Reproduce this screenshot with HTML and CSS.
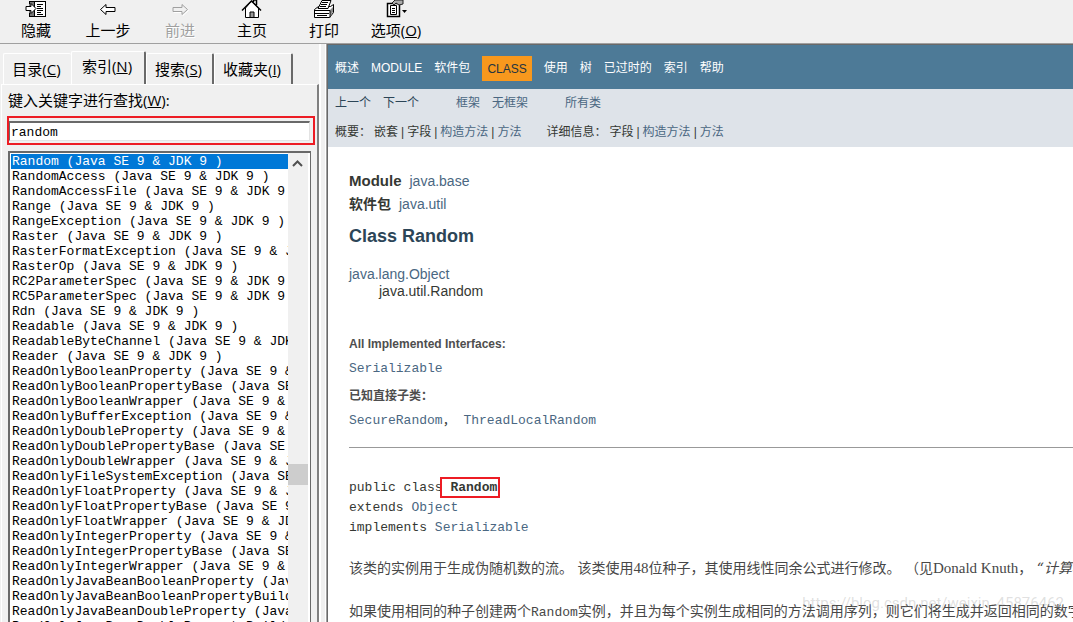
FILE: index.html
```html
<!DOCTYPE html>
<html lang="zh-CN">
<head>
<meta charset="utf-8">
<title>Class Random</title>
<link rel="stylesheet" href="styles.css">
</head>
<body>
<div class="window">
  <header class="toolbar">
    <button class="tool" type="button">
      <svg class="icon" width="22" height="18" viewBox="0 0 22 18" shape-rendering="crispEdges"><path d="M5 1H21V17H5z" fill="#fff"/><path d="M4 1h6v16H4z" fill="#777"/><path d="M4 1h17v1H4zM4 1h1v3H4zM4 13h1v4H4zM9 1h1v16H9zM20 1h1v16h-1zM4 16h17v1H4z" fill="#000"/><path d="M12 4h6M12 6h4M12 8h6M12 10h6M12 12h4M12 14h6" transform="translate(0 .5)" stroke="#000"/><path d="M1 6.5h5v-3l5 5-5 5v-3H1z" fill="#fff" stroke="#000" shape-rendering="auto"/></svg>
      <span>隐藏</span>
    </button>
    <button class="tool" type="button">
      <svg class="icon" width="22" height="18" viewBox="0 0 22 18"><path d="M3.500 9.500l5.500-5v3h9v4h-9v3z" fill="#fff" stroke="#000"/></svg>
      <span>上一步</span>
    </button>
    <button class="tool" type="button" disabled>
      <svg class="icon" width="22" height="18" viewBox="0 0 22 18"><path d="M19.500 10.500l-5.500-5v3h-9v4h9v3z" fill="none" stroke="#fff"/><path d="M18.500 9.500l-5.500-5v3h-9v4h9v3z" fill="#f0f0f0" stroke="#a0a0a0"/></svg>
      <span>前进</span>
    </button>
    <button class="tool" type="button">
      <svg class="icon" width="22" height="18" viewBox="0 0 22 18"><path d="M4.500 8v9.500h13V8L10.500 1z" fill="#fff" stroke="#000"/><path d="M1 10.500L10.500 1 20 10.500M15.500 5V0h-3v2" fill="none" stroke="#000" stroke-width="1.500"/><path d="M9 12h4v5.500H9z" fill="#999" stroke="#000"/></svg>
      <span>主页</span>
    </button>
    <button class="tool" type="button">
      <svg class="icon" width="22" height="18" viewBox="0 0 22 18"><path d="M1.500 9.500l4-3h12l3-2v8l-4 5h-15z" fill="#fff" stroke="#000"/><path d="M17 10l3-3v5l-3 4z" fill="#888"/><path d="M2 10.500h15v7M2 13.500h14" fill="none" stroke="#000"/><path d="M5 8.500l4-8h9l-3 8z" fill="#fff" stroke="#000"/><path d="M9 2.500h6M8 4.500h6M7 6.500h6M4 15.500h10" stroke="#000"/></svg>
      <span>打印</span>
    </button>
    <button class="tool" type="button">
      <svg class="icon" width="22" height="18" viewBox="0 0 22 18"><path d="M2.500 3.500h12v13h-12z" fill="#fff" stroke="#000" stroke-width="1.500"/><path d="M5.500 5.500h6v9h-6z" fill="#fff" stroke="#000"/><path d="M7 8.500h3M7 10.500h3M7 12.500h3" stroke="#000"/><path d="M7 3l3-3h8v4l-4 1-3-2-2 2z" fill="#aaa" stroke="#222"/><path d="M17 10h5l-2.500 3z" fill="#000"/></svg>
      <span>选项(<u>O</u>)</span>
    </button>
  </header>
  <div class="panes">
    <aside class="side">
      <div class="tabs" role="tablist">
        <button class="tab" type="button" role="tab">目录(<u>C</u>)</button>
        <button class="tab tab-active" type="button" role="tab" aria-selected="true">索引(<u>N</u>)</button>
        <button class="tab" type="button" role="tab">搜索(<u>S</u>)</button>
        <button class="tab tab-last" type="button" role="tab">收藏夹(<u>I</u>)</button>
      </div>
      <div class="panel">
        <label class="search-label" for="keyword">键入关键字进行查找(<u>W</u>):</label>
        <div class="highlight"><input class="search" id="keyword" type="text" value="random"></div>
        <div class="listbox">
          <ul class="entries" role="listbox" aria-label="索引">
            <li class="entry entry-selected" role="option" aria-selected="true">Random (Java SE 9 &amp; JDK 9 )</li>
            <li class="entry" role="option">RandomAccess (Java SE 9 &amp; JDK 9 )</li>
            <li class="entry" role="option">RandomAccessFile (Java SE 9 &amp; JDK 9 )</li>
            <li class="entry" role="option">Range (Java SE 9 &amp; JDK 9 )</li>
            <li class="entry" role="option">RangeException (Java SE 9 &amp; JDK 9 )</li>
            <li class="entry" role="option">Raster (Java SE 9 &amp; JDK 9 )</li>
            <li class="entry" role="option">RasterFormatException (Java SE 9 &amp; JDK 9 )</li>
            <li class="entry" role="option">RasterOp (Java SE 9 &amp; JDK 9 )</li>
            <li class="entry" role="option">RC2ParameterSpec (Java SE 9 &amp; JDK 9 )</li>
            <li class="entry" role="option">RC5ParameterSpec (Java SE 9 &amp; JDK 9 )</li>
            <li class="entry" role="option">Rdn (Java SE 9 &amp; JDK 9 )</li>
            <li class="entry" role="option">Readable (Java SE 9 &amp; JDK 9 )</li>
            <li class="entry" role="option">ReadableByteChannel (Java SE 9 &amp; JDK 9 )</li>
            <li class="entry" role="option">Reader (Java SE 9 &amp; JDK 9 )</li>
            <li class="entry" role="option">ReadOnlyBooleanProperty (Java SE 9 &amp; JDK 9 )</li>
            <li class="entry" role="option">ReadOnlyBooleanPropertyBase (Java SE 9 &amp; JDK 9 )</li>
            <li class="entry" role="option">ReadOnlyBooleanWrapper (Java SE 9 &amp; JDK 9 )</li>
            <li class="entry" role="option">ReadOnlyBufferException (Java SE 9 &amp; JDK 9 )</li>
            <li class="entry" role="option">ReadOnlyDoubleProperty (Java SE 9 &amp; JDK 9 )</li>
            <li class="entry" role="option">ReadOnlyDoublePropertyBase (Java SE 9 &amp; JDK 9 )</li>
            <li class="entry" role="option">ReadOnlyDoubleWrapper (Java SE 9 &amp; JDK 9 )</li>
            <li class="entry" role="option">ReadOnlyFileSystemException (Java SE 9 &amp; JDK 9 )</li>
            <li class="entry" role="option">ReadOnlyFloatProperty (Java SE 9 &amp; JDK 9 )</li>
            <li class="entry" role="option">ReadOnlyFloatPropertyBase (Java SE 9 &amp; JDK 9 )</li>
            <li class="entry" role="option">ReadOnlyFloatWrapper (Java SE 9 &amp; JDK 9 )</li>
            <li class="entry" role="option">ReadOnlyIntegerProperty (Java SE 9 &amp; JDK 9 )</li>
            <li class="entry" role="option">ReadOnlyIntegerPropertyBase (Java SE 9 &amp; JDK 9 )</li>
            <li class="entry" role="option">ReadOnlyIntegerWrapper (Java SE 9 &amp; JDK 9 )</li>
            <li class="entry" role="option">ReadOnlyJavaBeanBooleanProperty (Java SE 9 &amp; JDK 9 )</li>
            <li class="entry" role="option">ReadOnlyJavaBeanBooleanPropertyBuilder (Java SE 9 &amp; JDK 9 )</li>
            <li class="entry" role="option">ReadOnlyJavaBeanDoubleProperty (Java SE 9 &amp; JDK 9 )</li>
            <li class="entry" role="option">ReadOnlyJavaBeanDoublePropertyBuilder (Java SE 9 &amp; JDK 9 )</li>
          </ul>
          <div class="scrollbar">
            <svg width="19" height="20" viewBox="0 0 19 20"><path d="M5 13l4.500-4.500L14 13" fill="none" stroke="#505050" stroke-width="2"/></svg>
            <div class="track-space"></div>
            <div class="thumb"></div>
          </div>
        </div>
      </div>
    </aside>
    <div class="splitter"></div>
    <main class="doc">
      <nav class="topnav">
        <a href="#">概述</a><a href="#">MODULE</a><a href="#">软件包</a><span class="current">CLASS</span><a href="#">使用</a><a href="#">树</a><a href="#">已过时的</a><a href="#">索引</a><a href="#">帮助</a>
      </nav>
      <div class="subnav">
        <div class="subrow">
          <div class="group"><a class="strong" href="#">上一个</a><a class="strong" href="#">下一个</a></div>
          <div class="group"><a href="#">框架</a><a href="#">无框架</a></div>
          <div class="group"><a href="#">所有类</a></div>
        </div>
        <div class="subrow details">
          <div class="crumbs"><span>概要：</span><span>嵌套</span><span>|</span><span>字段</span><span>|</span><a href="#">构造方法</a><span>|</span><a href="#">方法</a></div>
          <div class="crumbs"><span>详细信息：</span><span>字段</span><span>|</span><a href="#">构造方法</a><span>|</span><a href="#">方法</a></div>
        </div>
      </div>
      <article class="content">
        <div class="origin"><b>Module</b><a href="#">java.base</a></div>
        <div class="origin"><b class="package">软件包</b><a href="#">java.util</a></div>
        <h1 class="title">Class Random</h1>
        <div class="tree"><a href="#">java.lang.Object</a><div class="child">java.util.Random</div></div>
        <dl class="facts">
          <dt>All Implemented Interfaces:</dt>
          <dd><a href="#">Serializable</a></dd>
          <dt>已知直接子类：</dt>
          <dd><a href="#">SecureRandom</a>， <a href="#">ThreadLocalRandom</a></dd>
        </dl>
        <hr class="rule">
        <pre class="signature">public class<b class="marked"> Random</b>
extends <a href="#">Object</a>
implements <a href="#">Serializable</a></pre>
        <p class="text">该类的实例用于生成伪随机数的流。 该类使用<span class="latin">48</span>位种子，其使用线性同余公式进行修改。 （见<span class="latin">Donald Knuth</span>， <i>“计算机编程艺术，第2卷”</i> ，第3.2.1节）</p>
        <p class="text">如果使用相同的种子创建两个<code>Random</code>实例，并且为每个实例生成相同的方法调用序列，则它们将生成并返回相同的数字序列。</p>
      </article>
      <div class="watermark">https://blog.csdn.net/weixin_45876462</div>
    </main>
  </div>
</div>
</body>
</html>
```
FILE: styles.css
```css
* { box-sizing: border-box; }

body {
  margin: 0;
  background: #f0f0f0;
  color: #000;
  font: 15px/20px "Open Sans", "Noto Sans CJK SC", sans-serif;
}

a { color: #4a6782; text-decoration: none; }
button { font: inherit; color: inherit; }

.window {
  display: flex;
  flex-direction: column;
  height: 100vh;
  overflow: hidden;
}

.toolbar {
  display: flex;
  flex: none;
  height: 44px;
  border-bottom: 1px solid #a0a0a0;
}

.tool {
  display: flex;
  flex-direction: column;
  align-items: center;
  gap: 2px;
  width: 72px;
  padding: 0 0 1px;
  border: 0;
  background: none;
  white-space: nowrap;
}

.tool:disabled { color: #a0a0a0; text-shadow: 1px 1px #fff; }
.icon { display: block; flex: none; }

.panes { display: flex; flex: 1; min-height: 0; }

.side {
  display: flex;
  flex-direction: column;
  flex: none;
  width: 319px;
  padding: 7px 0 0 1px;
}

.tabs { display: flex; align-items: flex-end; padding-left: 2px; }

.tab {
  height: 31px;
  width: 68px;
  padding: 0 2px 0 0;
  border: 1px solid #fff;
  border-width: 1px 0 0 1px;
  border-radius: 2px 2px 0 0;
  background: #f0f0f0;
  white-space: nowrap;
}

.tab:nth-child(n+3) { border-right: 2px solid #696969; }

.tab-active {
  width: 75px;
  height: 33px;
  padding-bottom: 4px;
  border-right: 2px solid #696969;
}

.tab-last { width: 79px; }

.panel {
  display: flex;
  flex-direction: column;
  flex: 1;
  min-height: 0;
  padding: 5px 2px 0 6px;
  border: 1px solid #fff;
  border-width: 1px 2px 0 1px;
  border-right-color: #808080;
}

.search-label { margin-bottom: 6px; }

.highlight {
  display: flex;
  height: 29px;
  border: 2px solid #ed1c24;
  padding: 3px 3px 2px 0;
  margin: 0 0 6px -1px;
}

.search {
  flex: 1;
  min-width: 0;
  padding: 2px 1px 0;
  border: 1px solid #e3e3e3;
  border-top: 2px solid #696969;
  border-left-color: #696969;
  outline: 0;
  background: #fff;
  font: 13px "Liberation Mono", monospace;
}

.listbox {
  display: flex;
  flex: 1;
  min-height: 0;
  margin-right: 4px;
  border: 2px solid #696969;
  border-width: 2px 1px 0 2px;
  background: #fff;
}

.entries {
  flex: 1;
  min-width: 0;
  margin: 0;
  padding: 1px 0 0 1px;
  overflow: hidden;
  list-style: none;
  font: 13px/14px "Liberation Mono", monospace;
}

.entry { padding: 1px 0 0 1px; white-space: pre; }
.entry-selected { background: #0078d7; color: #fff; }

.scrollbar {
  display: flex;
  flex-direction: column;
  width: 20px;
  margin-right: 2px;
  background: #f0f0f0;
}

.track-space { flex: 290; }
.thumb { flex: none; height: 21px; background: #cdcdcd; }
.scrollbar::after { content: ""; flex: 137; }

.splitter {
  flex: none;
  width: 7px;
  margin-right: 1px;
  border-left: 2px solid #fff;
  border-right: 1px solid #fff;
}

.doc {
  position: relative;
  flex: 1;
  min-width: 0;
  overflow: hidden;
  border: 1px solid #696969;
  border-width: 1px 0 0 1px;
  outline: 1px solid #a0a0a0;
  background: #fff;
  color: #353833;
  font-family: "Liberation Sans", "Noto Sans CJK SC", sans-serif;
  font-size: 14px;
}

.topnav {
  display: flex;
  align-items: center;
  gap: 12px;
  height: 44px;
  padding: 2px 10px 0 7px;
  background: #4d7a97;
  font-size: 12px;
  white-space: nowrap;
}

.topnav a { color: #fff; }

.current {
  padding: 3px 5px 2px;
  background: #f8981d;
  color: #253441;
}

.subnav {
  height: 58px;
  padding: 4px 7px 0;
  background: #dee3e9;
  font-size: 12px;
  white-space: nowrap;
}

.subrow { display: flex; gap: 37px; }
.group { display: flex; gap: 12px; }
.strong { color: #2c4557; }
.details { gap: 25px; margin-top: 9px; }
.crumbs { display: flex; gap: 3px; }

.content { padding: 24px 0 0 21px; }

.origin {
  display: flex;
  gap: 8px;
  margin-bottom: 3px;
}

.origin b { font-size: 15px; }
.origin .package { font-size: 14px; }

.title {
  margin: 12px 0 20px;
  color: #2c4557;
  font-size: 18px;
  line-height: 20px;
}

.tree { line-height: 17px; }
.child { padding-left: 30px; }

.facts { margin: 34px 0 0; }
.facts dt { color: #4e4e4e; font-size: 12px; font-weight: bold; line-height: 20px; }
.facts dd {
  margin: 5px 0 7px;
  font: 13px/20px "Liberation Mono", "Noto Sans CJK SC", monospace;
}

.rule {
  height: 1px;
  margin: 16px 0 30px;
  border: 0;
  background: #999;
}

.signature {
  margin: 0 0 20px;
  font: 13px/20px "Liberation Mono", monospace;
}

.marked { outline: 2px solid #ed1c24; outline-offset: 1px; }

.text {
  margin: 0 0 22px;
  color: #474747;
  font: 14px/21px "DejaVu Serif", "Noto Sans CJK SC", sans-serif;
  white-space: nowrap;
}

.latin { font: 15px/20px "Liberation Serif", serif; }
.text code { font: 13px/20px "Liberation Mono", monospace; }

.watermark {
  position: absolute;
  right: 9px;
  bottom: 9px;
  color: rgba(150, 150, 150, 0.3);
  font-family: Roboto, sans-serif;
  font-size: 15px;
}
```
